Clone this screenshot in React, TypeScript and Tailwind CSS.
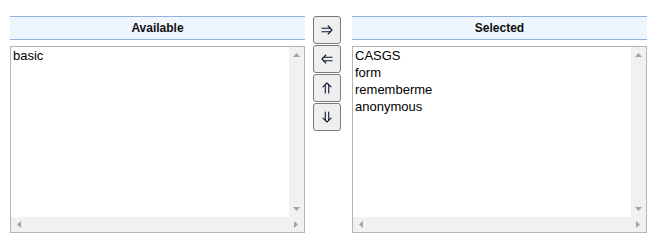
import React from 'react'

const available = ['basic']
const selected = ['CASGS', 'form', 'rememberme', 'anonymous']

const Tri: React.FC<{ dir: 'up' | 'down' | 'left' | 'right' }> = ({ dir }) => {
  const pts = {
    up: '0,4 7,4 3.5,0',
    down: '0,0 7,0 3.5,4',
    left: '4,0 4,7 0,3.5',
    right: '0,0 0,7 4,3.5',
  }[dir]
  const vertical = dir === 'up' || dir === 'down'
  return (
    <svg width={vertical ? 7 : 4} height={vertical ? 4 : 7} viewBox={vertical ? '0 0 7 4' : '0 0 4 7'}>
      <polygon points={pts} fill="#a3a3a3" />
    </svg>
  )
}

// double-stroke arrow (⇒) drawn pointing right, rotated for the other directions
const DoubleArrow: React.FC<{ rotate: number }> = ({ rotate }) => (
  <svg width="12" height="12" viewBox="0 0 12 12" style={{ transform: `rotate(${rotate}deg)` }}>
    <g fill="none" stroke="#101a36" strokeWidth="1.1" strokeLinecap="round" strokeLinejoin="round">
      <path d="M1 4.3H8.6" />
      <path d="M1 7.7H8.6" />
      <path d="M7.2 2L11 6L7.2 10" />
    </g>
  </svg>
)

const ListPanel: React.FC<{ title: string; items: string[] }> = ({ title, items }) => (
  <div className="w-[295px] flex flex-col">
    <div className="h-6 border-y border-[#8db2dd] bg-[#eef5fe] flex items-center justify-center text-[12px] font-bold text-[#111]">
      {title}
    </div>
    <div className="mt-[6px] h-[187px] border border-[#b5b5b5] bg-white flex flex-col">
      <div className="flex flex-1 min-h-0">
        <div className="flex-1 pl-[2px] text-[13px] leading-[17px] text-[#000]">
          {items.map((item) => (
            <div key={item}>{item}</div>
          ))}
        </div>
        <div className="w-[15px] bg-[#f1f1f1] flex flex-col items-center justify-between py-[6px]">
          <Tri dir="up" />
          <Tri dir="down" />
        </div>
      </div>
      <div className="h-[15px] bg-[#f1f1f1] flex items-center justify-between pl-[6px] pr-[6px]">
        <Tri dir="left" />
        <Tri dir="right" />
      </div>
    </div>
  </div>
)

const MoveButton: React.FC<{ rotate: number; title: string }> = ({ rotate, title }) => (
  <button
    title={title}
    className="w-[28px] h-[28px] bg-[#efefef] border border-[#7a7a7a] rounded-[3px] flex items-center justify-center"
  >
    <DoubleArrow rotate={rotate} />
  </button>
)

export default function App() {
  return (
    <div className="w-[659px] h-[247px] bg-white flex items-start pt-4 pl-[10px] font-['Liberation_Sans',Arial,sans-serif]">
      <ListPanel title="Available" items={available} />
      <div className="ml-2 flex flex-col gap-px">
        <MoveButton rotate={0} title="Add" />
        <MoveButton rotate={180} title="Remove" />
        <MoveButton rotate={-90} title="Move up" />
        <MoveButton rotate={90} title="Move down" />
      </div>
      <div className="ml-[11px]">
        <ListPanel title="Selected" items={selected} />
      </div>
    </div>
  )
}
